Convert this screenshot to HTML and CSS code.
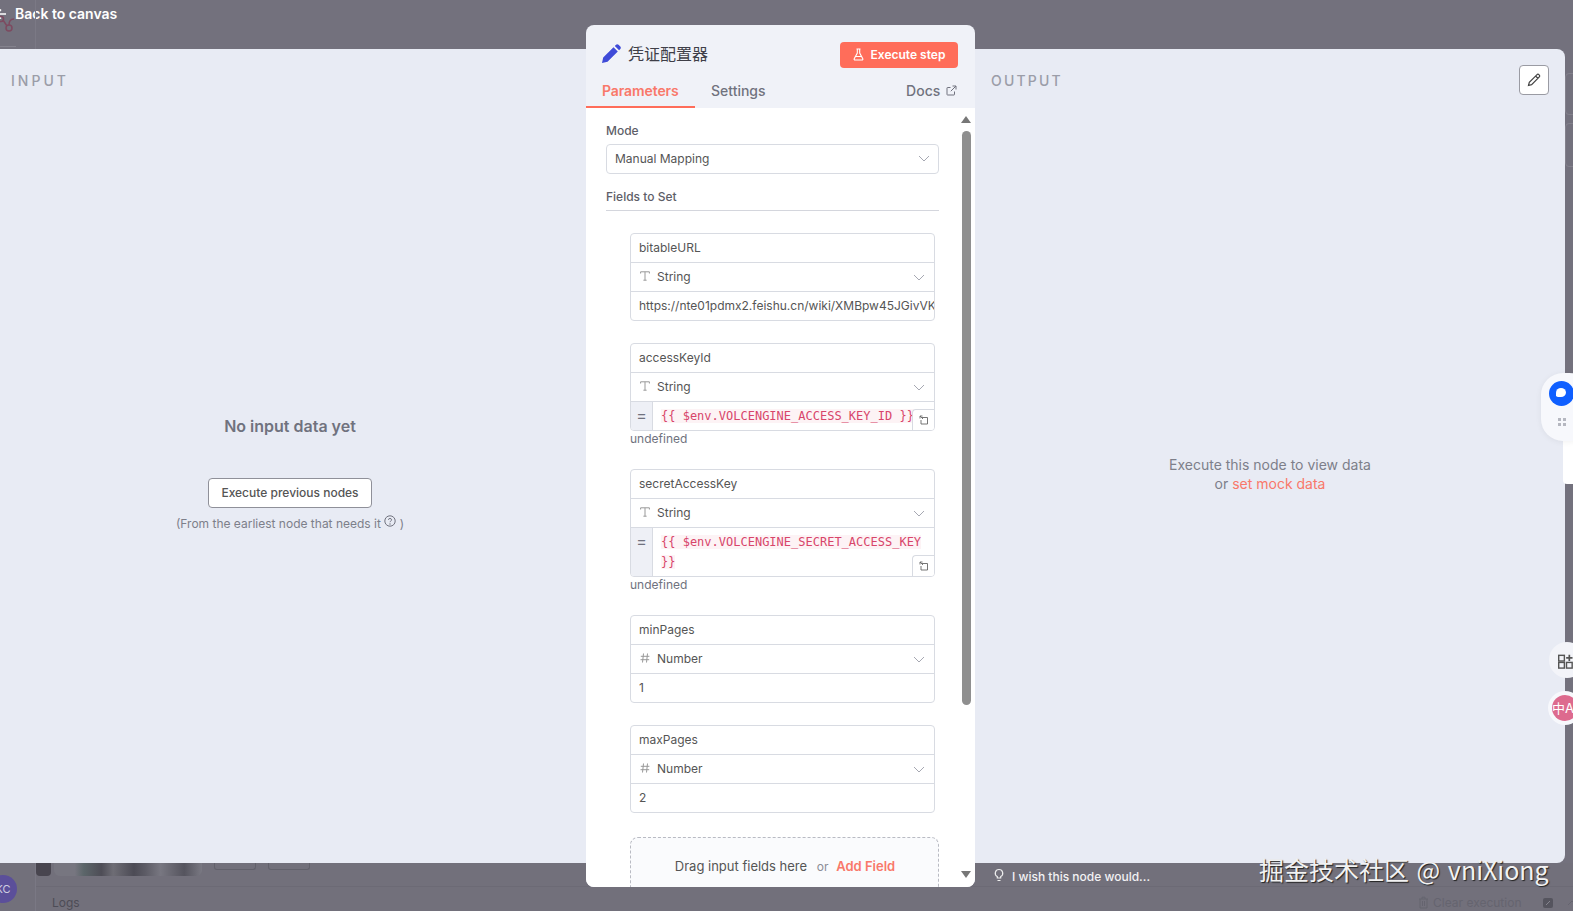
FILE: index.html
```html
<!DOCTYPE html>
<html lang="en">
<head>
    <meta charset="UTF-8">
    <meta name="viewport" content="width=device-width, initial-scale=1.0">
    <title>Node details</title>
    <link rel="stylesheet" href="styles.css">
</head>
<body>

    <div class="page">
        <div class="topbar">
            <svg class="back-arrow" width="12" height="12" viewBox="0 0 12 12"><path d="M6 1.500 1.500 6 6 10.500M1.500 6H11" fill="none" stroke="#fff" stroke-width="1.600"/></svg>
            <span class="back-label">Back to canvas</span>
            <svg class="ghost-logo" width="18" height="20" viewBox="0 0 18 20"><g fill="none" stroke="#7d4a60" stroke-width="1.500"><circle cx="2" cy="5" r="2.500"/><circle cx="10" cy="14" r="3"/><path d="M4 6 8 12M10 11C10 6 12 5 15 5"/></g></svg>
            <div class="ghost-vline"></div>
            <div class="ghost-hline"></div>
        </div>

        <div class="panel">
            <section class="input-col">
                <div class="col-title">INPUT</div>
                <div class="no-data-title">No input data yet</div>
                <button class="outline-btn">Execute previous nodes</button>
                <div class="no-data-hint">(From the earliest node that needs it
                    <svg class="hint-icon" width="12" height="12" viewBox="0 0 12 12"><g fill="none" stroke="#70727e"><circle cx="6" cy="6" r="5.200"/><path d="M4.400 4.800C4.400 3 7.600 3 7.600 4.800 7.600 6 6 6 6 7.200"/></g><circle cx="6" cy="9" r=".7" fill="#70727e"/></svg>
                    )</div>
            </section>
            <div class="card-gap"></div>
            <section class="output-col">
                <div class="col-title">OUTPUT</div>
                <button class="edit-btn">
                    <svg width="14" height="14" viewBox="0 0 14 14"><path d="M1.500 12.500 2.300 9.300 9.800 1.800C10.500 1.100 11.400 1.100 12.100 1.800 12.800 2.500 12.800 3.400 12.100 4.100L4.600 11.600ZM8.600 3 10.900 5.300" fill="none" stroke="#444" stroke-width="1.200"/></svg>
                </button>
                <div class="run-hint">Execute this node to view data<br>or <span class="accent-link">set mock data</span></div>
            </section>
        </div>

        <div class="bottom">
            <div class="ghost-avatar">KC</div>
            <div class="ghost-vline"></div>
            <div class="ghost-thumb"></div>
            <div class="ghost-strip"></div>
            <div class="ghost-box ghost-box-a"></div>
            <div class="ghost-box ghost-box-b"></div>
            <div class="ghost-rule"></div>
            <span class="logs-label">Logs</span>
            <svg class="wish-icon" width="12" height="15" viewBox="0 0 12 15"><path d="M6 1.500A3.700 3.700 0 0 0 4.300 8.500V10H7.700V8.500A3.700 3.700 0 0 0 6 1.500ZM4.500 12.500H7.500" fill="none" stroke="#eee" stroke-width="1.200"/></svg>
            <span class="wish-label">I wish this node would...</span>
            <div class="log-actions">
                <svg width="11" height="13" viewBox="0 0 11 13"><path d="M1 3H10M4 3V1.200H7V3M2 3V12H9V3M4.500 5V10M6.500 5V10" fill="none" stroke="#65646f"/></svg>
                <span class="clear-label">Clear execution</span>
                <svg class="log-square" width="12" height="12" viewBox="0 0 12 12"><rect x="1" y="1" width="10" height="10" rx="2" fill="#55545e"/><path d="M4 8 8 4" stroke="#86858f"/></svg>
                <svg width="10" height="6" viewBox="0 0 10 6"><path d="M1 5 5 1 9 5" fill="none" stroke="#65646f"/></svg>
            </div>
        </div>

        <div class="ghost-side ghost-side-a"></div>
        <div class="ghost-side ghost-side-b"></div>

        <div class="node-card">
            <div class="card-head">
                <svg class="title-icon" width="20" height="20" viewBox="0 0 20 20"><path d="M1 19 2.200 13.500 12.500 3.200 16.800 7.500 6.500 17.800ZM13.800 1.900 15 .7C15.700 0 16.800 0 17.500 .7L19.300 2.500C20 3.200 20 4.300 19.300 5L18.100 6.200Z" fill="#3f4bd8"/></svg>
                <span class="card-title">凭证配置器</span>
                <button class="run-btn">
                    <svg width="11" height="13" viewBox="0 0 11 13"><path d="M3.500 1H7.500M4.300 1V5L1.200 10.800C.9 11.400 1.300 12 2 12H9C9.700 12 10.100 11.400 9.800 10.800L6.700 5V1M3 8.500H8" fill="none" stroke="#fff" stroke-width="1.100"/></svg>
                    Execute step
                </button>
            </div>
            <div class="tabs">
                <span class="tab tab-active">Parameters</span>
                <span class="tab">Settings</span>
                <span class="tab-docs">Docs
                    <svg width="11" height="11" viewBox="0 0 11 11"><path d="M8.500 6.500V9.500C8.500 9.800 8.300 10 8 10H1.500C1.200 10 1 9.800 1 9.500V3C1 2.700 1.200 2.500 1.500 2.500H4.500M6.500 1H10V4.500M10 1 4.800 6.200" fill="none" stroke="#70727e"/></svg>
                </span>
            </div>

            <div class="card-body">
                <div class="form">
                    <div class="form-label">Mode</div>
                    <div class="select-box">
                        Manual Mapping
                        <svg class="chevron" width="12" height="7" viewBox="0 0 12 7"><path d="M1 1 6 6 11 1" fill="none" stroke="#a6a8b2"/></svg>
                    </div>
                    <div class="section-label">Fields to Set</div>

                    <div class="field">
                        <div class="field-row">bitableURL</div>
                        <div class="field-row">
                            <svg class="type-icon" width="10" height="10" viewBox="0 0 10 10"><path d="M.6 2.500V.8H9.400V2.500M5 .8V9.200M3.400 9.200H6.600" fill="none" stroke="#999"/></svg>
                            String
                            <svg class="chevron" width="12" height="7" viewBox="0 0 12 7"><path d="M1 1 6 6 11 1" fill="none" stroke="#a6a8b2"/></svg>
                        </div>
                        <div class="field-row field-clip">https://nte01pdmx2.feishu.cn/wiki/XMBpw45JGivVK</div>
                    </div>

                    <div class="field">
                        <div class="field-row">accessKeyId</div>
                        <div class="field-row">
                            <svg class="type-icon" width="10" height="10" viewBox="0 0 10 10"><path d="M.6 2.500V.8H9.400V2.500M5 .8V9.200M3.400 9.200H6.600" fill="none" stroke="#999"/></svg>
                            String
                            <svg class="chevron" width="12" height="7" viewBox="0 0 12 7"><path d="M1 1 6 6 11 1" fill="none" stroke="#a6a8b2"/></svg>
                        </div>
                        <div class="expr-row">
                            <div class="expr-eq">=</div>
                            <div class="expr-code"><span class="expr-token">{{ $env.VOLCENGINE_ACCESS_KEY_ID }}</span></div>
                            <div class="expr-expand"><svg width="10" height="10" viewBox="0 0 10 10"><path d="M1 3.500V1H3.500M1 1 4 4M3 2.500H8.500V9H2V5" fill="none" stroke="#666" stroke-width=".9"/></svg></div>
                        </div>
                    </div>
                    <div class="field-note">undefined</div>

                    <div class="field">
                        <div class="field-row">secretAccessKey</div>
                        <div class="field-row">
                            <svg class="type-icon" width="10" height="10" viewBox="0 0 10 10"><path d="M.6 2.500V.8H9.400V2.500M5 .8V9.200M3.400 9.200H6.600" fill="none" stroke="#999"/></svg>
                            String
                            <svg class="chevron" width="12" height="7" viewBox="0 0 12 7"><path d="M1 1 6 6 11 1" fill="none" stroke="#a6a8b2"/></svg>
                        </div>
                        <div class="expr-row expr-tall">
                            <div class="expr-eq">=</div>
                            <div class="expr-code"><span class="expr-token">{{ $env.VOLCENGINE_SECRET_ACCESS_KEY</span><br><span class="expr-token">}}</span></div>
                            <div class="expr-expand"><svg width="10" height="10" viewBox="0 0 10 10"><path d="M1 3.500V1H3.500M1 1 4 4M3 2.500H8.500V9H2V5" fill="none" stroke="#666" stroke-width=".9"/></svg></div>
                        </div>
                    </div>
                    <div class="field-note">undefined</div>

                    <div class="field">
                        <div class="field-row">minPages</div>
                        <div class="field-row">
                            <svg class="type-icon" width="10" height="10" viewBox="0 0 10 10"><path d="M3.500 .5 2.500 9.500M7.500 .5 6.500 9.500M.8 3.300H9.400M.5 6.700H9.200" fill="none" stroke="#999"/></svg>
                            Number
                            <svg class="chevron" width="12" height="7" viewBox="0 0 12 7"><path d="M1 1 6 6 11 1" fill="none" stroke="#a6a8b2"/></svg>
                        </div>
                        <div class="field-row">1</div>
                    </div>

                    <div class="field field-gap">
                        <div class="field-row">maxPages</div>
                        <div class="field-row">
                            <svg class="type-icon" width="10" height="10" viewBox="0 0 10 10"><path d="M3.500 .5 2.500 9.500M7.500 .5 6.500 9.500M.8 3.300H9.400M.5 6.700H9.200" fill="none" stroke="#999"/></svg>
                            Number
                            <svg class="chevron" width="12" height="7" viewBox="0 0 12 7"><path d="M1 1 6 6 11 1" fill="none" stroke="#a6a8b2"/></svg>
                        </div>
                        <div class="field-row">2</div>
                    </div>

                    <div class="dropzone">
                        <span class="drop-text">Drag input fields here</span>
                        <span class="drop-or">or</span>
                        <span class="drop-add">Add Field</span>
                    </div>
                </div>

                <div class="scrollbar">
                    <div class="arrow-up"></div>
                    <div class="scroll-thumb"></div>
                    <div class="arrow-down"></div>
                </div>
            </div>
        </div>

        <div class="chat-tail"></div>
        <div class="chat-widget">
            <div class="chat-ball"><div class="chat-ball-dot"></div></div>
            <div class="chat-grip"><i></i><i></i><i></i><i></i></div>
        </div>
        <div class="tool-ball">
            <svg width="17" height="16" viewBox="0 0 24 22"><g fill="none" stroke="#555" stroke-width="2"><rect x="1" y="3" width="8" height="8"/><rect x="1" y="13" width="8" height="8"/><rect x="12" y="13" width="8" height="8"/></g><path d="M16 2V11M11.500 6.500H20.500" stroke="#555" stroke-width="2.400"/></svg>
        </div>
        <div class="lang-ball"><div class="lang-inner">中A</div></div>

        <div class="watermark">掘金技术社区 @ vniXiong</div>
    </div>

</body>
</html>
```

FILE: styles.css
```css
* {
    box-sizing: border-box;
}
body {
    margin: 0;
    font-family: Inter, "Noto Sans CJK SC", sans-serif;
    background-color: #73717d;
}
button {
    font-family: inherit;
}
.page {
    position: relative;
    width: 1573px;
    height: 911px;
    overflow: hidden;
    display: flex;
    flex-direction: column;
}

/* top strip */
.topbar {
    position: relative;
    height: 49px;
    flex: none;
    padding: 3px 0 0 15px;
}
.back-label {
    font-size: 14px;
    font-weight: 600;
    line-height: 17px;
    color: #fff;
}
.back-arrow {
    position: absolute;
    left: -5px;
    top: 8px;
}
.ghost-logo {
    position: absolute;
    left: -1px;
    top: 14px;
}
.ghost-vline {
    position: absolute;
    left: 35px;
    top: 0;
    bottom: 0;
    width: 1px;
    background: #7b7985;
}
.ghost-hline {
    position: absolute;
    left: 0;
    bottom: 2px;
    width: 16px;
    height: 1px;
    background: #85838e;
}

/* main panel */
.panel {
    height: 814px;
    flex: none;
    width: 1565px;
    display: flex;
    background: #e8ebf4;
    border-radius: 0 8px 8px 0;
}
.input-col {
    width: 580px;
    padding-top: 23px;
    text-align: center;
}
.card-gap {
    width: 395px;
}
.output-col {
    position: relative;
    flex: 1;
    padding-top: 23px;
    text-align: center;
}
.col-title {
    font-size: 14px;
    font-weight: 500;
    line-height: 17px;
    letter-spacing: 3px;
    color: #9b9da8;
    text-align: left;
    padding-left: 11px;
}
.output-col .col-title {
    padding-left: 16px;
    letter-spacing: 2.200px;
}
.no-data-title {
    margin-top: 327px;
    font-size: 16px;
    font-weight: 600;
    line-height: 20px;
    color: #70727e;
}
.outline-btn {
    display: block;
    margin: 42px auto 0;
    width: 164px;
    height: 30px;
    padding: 0 0 2px;
    background: #fff;
    border: 1px solid #8f9099;
    border-radius: 4px;
    font-size: 12px;
    font-weight: 500;
    color: #555;
}
.no-data-hint {
    margin-top: 7px;
    font-size: 12px;
    line-height: 16px;
    color: #7d7f8a;
}
.hint-icon {
    vertical-align: 1px;
}
.edit-btn {
    position: absolute;
    top: 16px;
    right: 16px;
    width: 30px;
    height: 30px;
    padding: 0;
    display: flex;
    align-items: center;
    justify-content: center;
    background: #fff;
    border: 1px solid #9a9ba3;
    border-radius: 4px;
}
.run-hint {
    margin-top: 366px;
    font-size: 14px;
    line-height: 19px;
    color: #7d7f8a;
}
.accent-link {
    color: #f9786a;
}

/* bottom strip */
.bottom {
    position: relative;
    flex: 1;
    background: #72707b;
}
.bottom .ghost-vline {
    background: #7a7884;
}
.ghost-avatar {
    position: absolute;
    left: -11px;
    top: 12px;
    width: 28px;
    height: 28px;
    border-radius: 50%;
    background: #5b4f9a;
    color: #cfcde0;
    font-size: 11px;
    line-height: 28px;
    text-align: center;
}
.ghost-thumb {
    position: absolute;
    left: 36px;
    top: 0;
    width: 15px;
    height: 13px;
    background: #48454f;
    border-radius: 0 0 4px 4px;
}
.ghost-strip {
    position: absolute;
    left: 54px;
    top: 0;
    width: 148px;
    height: 13px;
    background: linear-gradient(90deg, #777680 0 14%, #5c666a 20%, #4e4d56 32%, #6e6d75 40%, #4c4b55 54%, #5d5c66 62%, #787781 72%, #55545e 88%, #7a7983);
    border-radius: 0 0 6px 6px;
}
.ghost-box {
    position: absolute;
    top: 0;
    width: 42px;
    height: 7px;
    border: 1px solid #62616b;
    border-top: none;
    border-radius: 0 0 3px 3px;
}
.ghost-box-a {
    left: 214px;
}
.ghost-box-b {
    left: 268px;
}
.ghost-rule {
    position: absolute;
    left: 36px;
    right: 0;
    top: 23px;
    height: 1px;
    background: #6c6a75;
}
.logs-label {
    position: absolute;
    left: 52px;
    top: 32px;
    font-size: 12px;
    line-height: 15px;
    color: #4d4c56;
}
.wish-icon {
    position: absolute;
    left: 993px;
    top: 5px;
}
.wish-label {
    position: absolute;
    left: 1012px;
    top: 6px;
    font-size: 12px;
    font-weight: 500;
    line-height: 15px;
    color: #f2f2f4;
}
.log-actions {
    position: absolute;
    left: 1418px;
    top: 32px;
    width: 160px;
    display: flex;
    align-items: center;
    gap: 4px;
    white-space: nowrap;
}
.clear-label {
    font-size: 12px;
    line-height: 15px;
    color: #65646f;
}
.log-square {
    margin: 0 9px 0 16px;
}

/* outlines of the page behind the panel */
.ghost-side {
    position: absolute;
    left: 1565px;
    width: 12px;
    border: 1px solid #83818c;
    border-radius: 4px;
}
.ghost-side-a {
    top: 73px;
    height: 42px;
}
.ghost-side-b {
    top: 123px;
    height: 44px;
}

/* node settings card */
.node-card {
    position: absolute;
    left: 586px;
    top: 25px;
    width: 389px;
    height: 862px;
    display: flex;
    flex-direction: column;
    background: #f0f2f8;
    border-radius: 8px;
    overflow: hidden;
}
.card-head {
    display: flex;
    align-items: center;
    height: 43px;
    padding: 17px 17px 0 15px;
    flex: none;
}
.title-icon {
    margin-top: -2px;
}
.card-title {
    margin: -2px 0 0 7px;
    font-size: 16px;
    line-height: 22px;
    color: #3f3f48;
}
.run-btn {
    margin-left: auto;
    width: 118px;
    height: 26px;
    padding: 0 0 2px;
    display: flex;
    align-items: center;
    justify-content: center;
    gap: 7px;
    background: #ff6d5a;
    border: none;
    border-radius: 4px;
    font-size: 12px;
    font-weight: 600;
    color: #fff;
}
.tabs {
    display: flex;
    height: 40px;
    flex: none;
}
.tab {
    padding: 14px 16px 0;
    font-size: 14px;
    font-weight: 500;
    line-height: 17px;
    color: #70727e;
}
.tab-active {
    color: #f9786a;
    border-bottom: 2px solid #ff6d5a;
    font-weight: 600;
    letter-spacing: -.1px;
    width: 109px;
}
.tab-docs {
    margin-left: auto;
    padding: 14px 18px 0 0;
    font-size: 14px;
    font-weight: 500;
    line-height: 17px;
    color: #70727e;
}
.tab-docs svg {
    margin-left: 2px;
}
.card-body {
    flex: 1;
    display: flex;
    min-height: 0;
    background: #fff;
}
.form {
    width: 376px;
    padding: 15px 23px 0 20px;
    overflow: hidden;
}
.form-label {
    font-size: 12px;
    font-weight: 500;
    line-height: 16px;
    color: #5e5e68;
}
.select-box {
    position: relative;
    display: flex;
    align-items: center;
    height: 30px;
    margin-top: 5px;
    padding: 0 0 2px 8px;
    border: 1px solid #d8dbe2;
    border-radius: 4px;
    font-size: 12px;
    color: #555;
}
.select-box .chevron {
    right: 8px;
    margin-top: -4px;
}
.section-label {
    margin: 15px 0 22px;
    padding-bottom: 5px;
    border-bottom: 1px solid #d4d6dd;
    font-size: 12px;
    font-weight: 500;
    line-height: 16px;
    color: #5e5e68;
}

/* assignment fields */
.field {
    margin-left: 24px;
    width: 305px;
    border: 1px solid #d8dbe2;
    border-radius: 4px;
    overflow: hidden;
    margin-bottom: 22px;
}
.field-gap {
    margin-bottom: 24px;
}
.field-row {
    position: relative;
    display: flex;
    align-items: center;
    height: 28px;
    padding: 0 0 2px 8px;
    font-size: 12px;
    color: #555;
    white-space: nowrap;
}
.field-row + .field-row,
.field-row + .expr-row {
    border-top: 1px solid #d8dbe2;
    height: 29px;
}
.field-clip {
    overflow: hidden;
}
.type-icon {
    margin: 0 7px 0 1px;
}
.chevron {
    position: absolute;
    right: 9px;
    top: 50%;
    margin-top: -3px;
}
.expr-row {
    position: relative;
    display: flex;
    height: 29px;
}
.expr-tall {
    height: 49px !important;
}
.expr-eq {
    width: 22px;
    flex: none;
    padding-top: 3px;
    background: #eef0f6;
    border-right: 1px solid #d8dbe2;
    text-align: center;
    font-size: 16px;
    line-height: 20px;
    color: #70727e;
}
.expr-code {
    padding: 4px 0 0 8px;
    font-family: "DejaVu Sans Mono", monospace;
    font-size: 12px;
    line-height: 20px;
    white-space: nowrap;
    color: #d8456a;
}
.expr-token {
    background: #fdf3f5;
}
.expr-expand {
    position: absolute;
    right: 0;
    bottom: 0;
    width: 22px;
    height: 21px;
    display: flex;
    align-items: center;
    justify-content: center;
    background: #fff;
    border-top: 1px solid #d8dbe2;
    border-left: 1px solid #d8dbe2;
    border-top-left-radius: 4px;
}
.field-note {
    margin: -22px 0 22px 24px;
    font-size: 12px;
    line-height: 16px;
    color: #70727e;
}
.dropzone {
    margin-left: 24px;
    width: 309px;
    height: 90px;
    padding: 19px 0 0 1px;
    background: #fafbfd;
    border: 1px dashed #b9bbc3;
    border-radius: 8px;
    text-align: center;
    font-size: 13px;
    line-height: 18px;
}
.drop-text {
    color: #555;
}
.drop-or {
    margin: 0 4px 0 6px;
    font-size: 12px;
    color: #8a8c96;
}
.drop-add {
    font-weight: 600;
    color: #f9786a;
}

/* scrollbar */
.scrollbar {
    position: relative;
    flex: 1;
    padding: 0 4px 0 0;
}
.arrow-up,
.arrow-down {
    position: absolute;
    left: -1px;
    width: 0;
    height: 0;
    border-left: 5.500px solid transparent;
    border-right: 5.500px solid transparent;
}
.arrow-up {
    top: 8px;
    border-bottom: 7px solid #777;
}
.arrow-down {
    bottom: 9px;
    border-top: 7px solid #777;
}
.scroll-thumb {
    margin-top: 23px;
    width: 9px;
    height: 574px;
    background: #8f8f8f;
    border-radius: 5px;
}

/* floating browser extension widgets */
.chat-widget {
    position: absolute;
    left: 1541px;
    top: 373px;
    width: 50px;
    height: 68px;
    padding: 8px 0 0 8px;
    background: #f7f8fc;
    border-radius: 22px;
    box-shadow: 0 1px 6px rgba(0, 0, 0, .06);
}
.chat-tail {
    position: absolute;
    left: 1563px;
    top: 420px;
    width: 20px;
    height: 64px;
    background: #fff;
    border-radius: 4px;
}
.chat-ball {
    position: relative;
    width: 25px;
    height: 25px;
    background: #0f5fff;
    border-radius: 50%;
}
.chat-ball-dot {
    position: absolute;
    left: 7px;
    top: 7px;
    width: 10px;
    height: 9px;
    background: #fff;
    border-radius: 50% 50% 50% 20%;
}
.chat-grip {
    display: grid;
    grid-template-columns: 3px 3px;
    gap: 2px;
    margin: 12px 0 0 9px;
}
.chat-grip i {
    height: 3px;
    background: #b5b7c0;
}
.tool-ball {
    position: absolute;
    left: 1549px;
    top: 642px;
    width: 36px;
    height: 36px;
    padding: 11px 0 0 9px;
    background: #f3f4f9;
    border-radius: 50%;
}
.lang-ball {
    position: absolute;
    left: 1548px;
    top: 691px;
    width: 34px;
    height: 34px;
    padding: 4px;
    background: #f7f8fc;
    border-radius: 50%;
}
.lang-inner {
    width: 26px;
    height: 26px;
    background: #dd6a8e;
    border-radius: 50%;
    font-size: 13px;
    line-height: 26px;
    white-space: nowrap;
    color: #fff;
}

.watermark {
    position: absolute;
    left: 1259px;
    top: 851px;
    font-family: "Noto Sans CJK SC", sans-serif;
    font-size: 25px;
    line-height: 36px;
    word-spacing: 2px;
    white-space: nowrap;
    color: #f2f2f2;
    text-shadow: 1px 1px 1px #222;
}
```
